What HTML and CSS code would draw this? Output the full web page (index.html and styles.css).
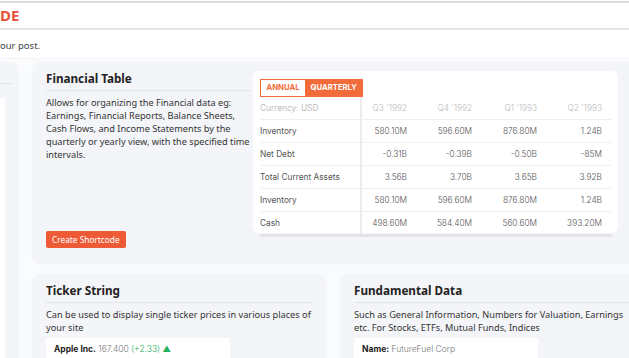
FILE: index.html
```html
<!DOCTYPE html>
<html lang="en">
<head>
    <meta charset="UTF-8">
    <title>Shortcodes</title>
    <link rel="stylesheet" href="styles.css">
</head>
<body>
    <div class="top-bar"></div>
    <div class="page-header">
        <h1>DE</h1>
    </div>
    <p class="intro">our post.</p>

    <div class="layout">
        <div class="side-card">
            <div class="side-line"></div>
            <div class="side-box"></div>
        </div>

        <div class="main">
            <div class="card card-wide">
                <div class="card-text">
                    <h2>Financial Table</h2>
                    <p>Allows for organizing the Financial data eg: Earnings, Financial Reports, Balance Sheets, Cash Flows, and Income Statements by the quarterly or yearly view, with the specified time intervals.</p>
                    <button class="shortcode-button">Create Shortcode</button>
                </div>
                <div class="fin-widget">
                    <div class="tabs">
                        <span class="tab">ANNUAL</span>
                        <span class="tab active">QUARTERLY</span>
                    </div>
                    <div class="table-scroll">
                        <table class="fin-table">
                            <tr class="head">
                                <td>Currency: USD</td><td>Q3 '1992</td><td>Q4 '1992</td><td>Q1 '1993</td><td>Q2 '1993</td>
                            </tr>
                            <tr><td>Inventory</td><td>580.10M</td><td>596.60M</td><td>876.80M</td><td>1.24B</td></tr>
                            <tr><td>Net Debt</td><td>-0.31B</td><td>-0.39B</td><td>-0.50B</td><td>-85M</td></tr>
                            <tr><td>Total Current Assets</td><td>3.56B</td><td>3.70B</td><td>3.65B</td><td>3.92B</td></tr>
                            <tr><td>Inventory</td><td>580.10M</td><td>596.60M</td><td>876.80M</td><td>1.24B</td></tr>
                            <tr><td>Cash</td><td>498.60M</td><td>584.40M</td><td>560.60M</td><td>393.20M</td></tr>
                        </table>
                    </div>
                    <div class="scrollbar"></div>
                </div>
            </div>

            <div class="card-row">
                <div class="card">
                    <h2>Ticker String</h2>
                    <p>Can be used to display single ticker prices in various places of your site</p>
                    <div class="demo-box">
                        <b>Apple Inc.</b> <span class="price">167.400</span> <span class="up">(+2.33) &#9650;</span>
                    </div>
                </div>
                <div class="card">
                    <h2>Fundamental Data</h2>
                    <p>Such as General Information, Numbers for Valuation, Earnings etc. For Stocks, ETFs, Mutual Funds, Indices</p>
                    <div class="demo-box">
                        <b>Name:</b> <span class="price">FutureFuel Corp</span>
                    </div>
                </div>
            </div>
        </div>
    </div>
</body>
</html>
```

FILE: styles.css
```css
body {
    font-family: "Noto Sans", sans-serif;
    margin: 0;
    width: 629px;
    height: 358px;
    overflow: hidden;
    background-color: #fafbfc;
    color: #333;
}
.top-bar {
    height: 2px;
    background-color: #dcdcdc;
    margin-top: 1px;
}
.page-header {
    background-color: #fff;
    height: 25px;
    border-bottom: 2px solid #e6e6e6;
}
.page-header h1 {
    margin: 0;
    font-size: 15px;
    line-height: 25px;
    color: #e8503a;
    font-weight: 700;
}
.intro {
    margin: 0;
    background-color: #fff;
    height: 29px;
    padding-top: 9px;
    font-size: 9.5px;
    color: #444;
    box-sizing: border-box;
    border-bottom: 1px solid #f1f2f4;
}
.layout {
    display: grid;
    grid-template-columns: 18px 620px;
    gap: 15px;
    padding-top: 3px;
}
.side-card {
    background-color: #f4f5f8;
    border-radius: 0 8px 0 0;
    height: 320px;
    box-shadow: 0 1px 3px rgba(0, 0, 0, 0.06);
}
.side-line {
    margin-top: 21px;
    height: 1px;
    width: 12px;
    background-color: #e3e4e7;
}
.side-box {
    margin-top: 14px;
    width: 5px;
    height: 280px;
    background-color: #fff;
}
.main {
    display: flex;
    flex-direction: column;
    gap: 12px;
}
.card {
    background-color: #f4f5f8;
    border-radius: 8px;
    padding: 8px 13px 10px;
    box-shadow: 0 1px 3px rgba(0, 0, 0, 0.07);
}
.card h2 {
    margin: 0;
    font-size: 11.7px;
    font-weight: 700;
    color: #222;
    padding-bottom: 4px;
    border-bottom: 1px solid #e2e4e8;
}
.card p {
    margin: 5px 0 0;
    font-size: 9.2px;
    line-height: 13px;
    color: #333;
}
.card-wide {
    display: flex;
    gap: 2px;
    height: 200px;
    box-sizing: border-box;
}
.card-text {
    width: 205px;
    flex-shrink: 0;
    display: flex;
    flex-direction: column;
}
.shortcode-button {
    margin-top: auto;
    align-self: flex-start;
    border: none;
    border-radius: 2px;
    background-color: #ef5a36;
    color: #fff;
    font-family: "Noto Sans", sans-serif;
    font-size: 8.3px;
    padding: 3px 6px;
    margin-bottom: 4px;
}
.fin-widget {
    background-color: #fff;
    border-radius: 6px;
    width: 365px;
    flex-shrink: 0;
    height: 162px;
    margin-top: 1px;
    padding: 8px 6px 0 7px;
    box-sizing: border-box;
    font-family: "Inter", sans-serif;
    font-size: 8.3px;
    color: #555;
}
.tabs {
    display: flex;
    border: 1px solid #f26b3a;
    width: fit-content;
    height: 16px;
}
.tab {
    font-weight: 700;
    font-size: 7.7px;
    color: #f26b3a;
    padding: 0 5.5px;
    line-height: 16px;
}
.tab.active {
    background-color: #f26b3a;
    color: #fff;
}
.table-scroll {
    width: 352px;
    overflow: hidden;
}
.fin-table {
    width: 362px;
    border-collapse: collapse;
    table-layout: fixed;
}
.fin-table td {
    width: 45px;
    height: 22px;
    border-top: 1px solid #f0f0f2;
    text-align: right;
    padding: 0 20px 0 0;
    font-weight: 300;
    white-space: nowrap;
}
.fin-table td:first-child {
    text-align: left;
    width: 100px;
    padding: 0;
    border-right: 2px solid #ececee;
    font-weight: 400;
}
.fin-table tr:first-child td {
    border-top: none;
}
.fin-table .head td {
    color: #bbb;
}
.scrollbar {
    height: 3px;
    background-color: #e4e4e6;
    border-radius: 2px;
    width: 352px;
}
.card-row {
    display: grid;
    grid-template-columns: 292px 1fr;
    gap: 16px;
}
.card-row .card {
    height: 100px;
}
.demo-box {
    background-color: #fff;
    width: 168px;
    margin-top: 4px;
    padding: 6px 8px;
    font-family: "Inter", sans-serif;
    font-size: 8.5px;
    height: 40px;
}
.demo-box b {
    color: #222;
}
.price {
    color: #777;
    font-weight: 300;
}
.up {
    color: #1fae5a;
    font-weight: 300;
}
```
